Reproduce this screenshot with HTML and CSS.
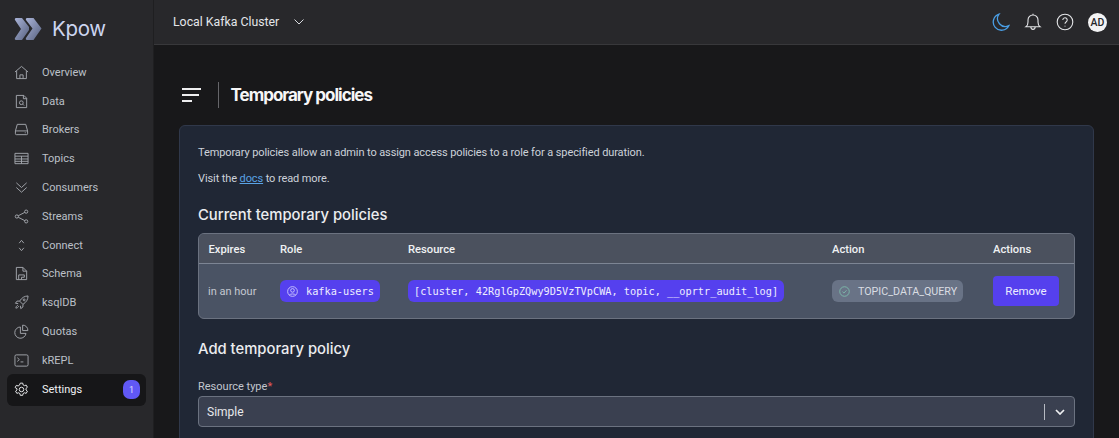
FILE: index.html
```html
<!DOCTYPE html>
<html lang="en">
<head>
<meta charset="utf-8">
<title>Temporary policies</title>
<link rel="stylesheet" href="styles.css">
</head>
<body>
<div class="app">
  <aside class="sidebar">
    <div class="brand">
      <svg class="logo" viewBox="0 0 28 24" width="28" height="24"><defs><linearGradient id="lg" x1="0" y1="0" x2="1" y2="1"><stop offset="0" stop-color="#aab4d8"/><stop offset="1" stop-color="#56607e"/></linearGradient></defs><path d="M2 1h6l7 9v3l-7 10H2c-1 0-1.500-1-1-2l6-9-6-9C.5 2 1 1 2 1z" fill="url(#lg)"/><path d="M13 1h6.500L27.500 11.500 19.500 23H13c-1 0-1.500-1-1-2l6.500-9.500L12 3c-.5-1 0-2 1-2z" fill="url(#lg)"/></svg>
      <span class="brand-name">Kpow</span>
    </div>
    <nav class="nav">
      <a class="nav-item"><svg class="ic" viewBox="0 0 16 16"><path d="M1 7.500 8 1.500l7 6M2.800 6.500V14.500h10.400V6.500M6.300 14.500v-4h3.400v4"/></svg><span>Overview</span></a>
      <a class="nav-item"><svg class="ic" viewBox="0 0 16 16"><path d="M2.500 1.500h8l3 3v10h-11zM10 1.500v3.500h3.500"/><circle cx="7.800" cy="9.300" r="2"/><path d="m9.300 10.800 1.400 1.400"/></svg><span>Data</span></a>
      <a class="nav-item"><svg class="ic" viewBox="0 0 16 16"><path d="M3.500 2.500h9l2 7v3a1 1 0 0 1-1 1h-11a1 1 0 0 1-1-1v-3zM1.500 9.500h13M11.500 11.500h1"/></svg><span>Brokers</span></a>
      <a class="nav-item"><svg class="ic" viewBox="0 0 16 16"><path d="M1 2.500h14v11H1zM1 5.500h14M1 8.500h14M1 11h14M8 5.500v8"/></svg><span>Topics</span></a>
      <a class="nav-item"><svg class="ic" viewBox="0 0 16 16"><path d="m2.500 3 5.500 5 5.500-5M2.500 8l5.500 5 5.500-5"/></svg><span>Consumers</span></a>
      <a class="nav-item"><svg class="ic" viewBox="0 0 16 16"><circle cx="3" cy="8" r="1.700"/><circle cx="13" cy="2.800" r="1.700"/><circle cx="13" cy="13.200" r="1.700"/><path d="m4.500 7.200 7-3.600M4.500 8.800l7 3.600"/></svg><span>Streams</span></a>
      <a class="nav-item"><svg class="ic" viewBox="0 0 16 16"><path d="m5.500 5.500 2.500-3 2.500 3M5.500 10.500l2.500 3 2.500-3"/></svg><span>Connect</span></a>
      <a class="nav-item"><svg class="ic" viewBox="0 0 16 16"><path d="M2.500 1.500h7l4 4v9h-11zM9.500 1.500v4h4M5 9.500h6v2.500H8v2.500M5 9.500v5"/></svg><span>Schema</span></a>
      <a class="nav-item"><svg class="ic" viewBox="0 0 16 16"><path d="M15 1c-4 .2-6.500 1.700-9 5.500l3.500 3.500C13.300 7.500 14.800 5 15 1zM6 6.500H3.200L1.500 8.800l3 .4M9.500 10v2.800l-2.300 1.700-.4-3M4 11c-1.300.5-2 2-2 3 1 0 2.500-.7 3-2"/><circle cx="10.800" cy="5.200" r="1"/></svg><span>ksqlDB</span></a>
      <a class="nav-item"><svg class="ic" viewBox="0 0 16 16"><path d="M6.800 3.200a6 6 0 1 0 6 6.800H6.800z"/><path d="M9.200 1.200a5.500 5.500 0 0 1 5.600 5.800H9.200z"/></svg><span>Quotas</span></a>
      <a class="nav-item"><svg class="ic" viewBox="0 0 16 16"><rect x="1" y="2" width="14" height="12" rx="1.500"/><path d="m3.500 5 2.200 2-2.200 2M7 9.500h3"/></svg><span>kREPL</span></a>
      <a class="nav-item active"><svg class="ic" viewBox="0 0 16 16"><circle cx="8" cy="8" r="2.400"/><path d="M6.700 1.200h2.600l.4 1.900 1.400.8 1.900-.6 1.300 2.300-1.500 1.300v1.600l1.500 1.300-1.300 2.300-1.900-.6-1.400.8-.4 1.900H6.700l-.4-1.900-1.400-.8-1.900.6-1.300-2.300 1.500-1.300V7.200L1.200 5.900l1.300-2.300 1.900.6 1.400-.8z"/></svg><span>Settings</span><b class="badge">1</b></a>
    </nav>
  </aside>
  <div class="column">
    <header class="topbar">
      <span class="cluster">Local Kafka Cluster</span>
      <svg class="cluster-chev" viewBox="0 0 10 6" width="10" height="6"><path d="m.5.500 4.500 4.500L9.500.500"/></svg>
      <div class="top-icons">
        <svg class="top-ic moon" viewBox="0 0 18 18" width="18" height="18"><path d="M7 1.200a7.800 7.800 0 0 0 9.800 11.500A8.200 8.200 0 1 1 7 1.200z"/></svg>
        <svg class="top-ic" viewBox="0 0 18 18" width="18" height="18"><path d="M2 13.800c1.400-1 2-2.300 2-4.800V7a5 5 0 0 1 10 0v2c0 2.500.6 3.800 2 4.800zM6.800 13.800c0 3.400 4.400 3.400 4.400 0M9 2V.8"/></svg>
        <svg class="top-ic" viewBox="0 0 18 18" width="18" height="18"><circle cx="9" cy="9" r="7.800"/><path d="M6.800 7a2.200 2.200 0 1 1 3.500 1.800C9.400 9.400 9 9.900 9 10.800M9 12.800v.6"/></svg>
        <span class="avatar">AD</span>
      </div>
    </header>
    <main class="main">
      <div class="page-head">
        <span class="burger"><i class="l1"></i><i class="l2"></i><i class="l3"></i></span>
        <span class="divider"></span>
        <h1>Temporary policies</h1>
      </div>
      <section class="card">
        <p class="intro">Temporary policies allow an admin to assign access policies to a role for a specified duration.</p>
        <p class="visit">Visit the <a class="link">docs</a> to read more.</p>
        <h2 class="h-current">Current temporary policies</h2>
        <div class="table-wrap">
          <table>
            <colgroup><col class="c1"><col class="c2"><col class="c3"><col class="c4"><col></colgroup>
            <thead><tr><th>Expires</th><th>Role</th><th>Resource</th><th>Action</th><th>Actions</th></tr></thead>
            <tbody><tr>
              <td class="muted">in an hour</td>
              <td><span class="chip"><svg class="chip-ic" viewBox="0 0 12 12" width="11" height="11"><circle cx="6" cy="6" r="5.300"/><circle cx="6" cy="4.800" r="2"/><path d="M2.700 9.800C3.500 8.300 8.500 8.300 9.300 9.800"/></svg>kafka-users</span></td>
              <td><span class="chip code">[cluster, 42RglGpZQwy9D5VzTVpCWA, topic, __oprtr_audit_log]</span></td>
              <td><span class="action-chip"><svg class="ok-ic" viewBox="0 0 12 12" width="11" height="11"><circle cx="6" cy="6" r="5.200"/><path d="m3.800 6.200 1.600 1.500 2.800-3"/></svg>TOPIC_DATA_QUERY</span></td>
              <td class="btn-cell"><button class="btn">Remove</button></td>
            </tr></tbody>
          </table>
        </div>
        <h2 class="h-add">Add temporary policy</h2>
        <label class="field-label">Resource type<em>*</em></label>
        <div class="select">
          <span>Simple</span>
          <span class="sel-sep"></span>
          <svg class="sel-chev" viewBox="0 0 10 6" width="10" height="6"><path d="m1 1 4 4 4-4"/></svg>
        </div>
      </section>
    </main>
  </div>
</div>
</body>
</html>
```

FILE: styles.css
```css
* { box-sizing: border-box; }
html, body { margin: 0; height: 100%; overflow: hidden; background: #18181a; }
body { font-family: Roboto, "Liberation Sans", sans-serif; color: #e5e7eb; }
.app { display: flex; height: 438px; width: 1119px; overflow: hidden; }

.sidebar { width: 154px; flex: none; background: #28282b; border-right: 1px solid #1f1f21; }
.brand { height: 44px; padding: 13px 0 0 14px; display: flex; align-items: center; gap: 10px; }
.logo { flex: none; }
.brand-name { font-family: Inter, sans-serif; font-size: 20.500px; font-weight: 400; color: #ccd5f0; letter-spacing: -.3px; }
.nav { padding: 14px 7px 0; display: flex; flex-direction: column; }
.nav-item { height: 28.800px; display: flex; align-items: center; gap: 13px; padding-left: 7px; font-size: 11px; font-weight: 400; color: #bcc0c8; }
.ic { width: 15px; height: 15px; flex: none; fill: none; stroke: #a4a7ae; stroke-width: 1; }
.nav-item.active { height: 32px; margin-top: -1px; background: #161618; border-radius: 6px; color: #f0f1f3; padding-right: 6px; }
.nav-item.active .ic { stroke: #f0f1f3; }
.badge { margin-left: auto; width: 17px; height: 19px; border-radius: 7px; background: #6058f5; color: #dcdcff; font-size: 9px; font-weight: 400; display: flex; align-items: center; justify-content: center; }

.column { flex: 1; min-width: 0; display: flex; flex-direction: column; }
.topbar { height: 45px; flex: none; background: #28282b; border-bottom: 1px solid #38383b; display: flex; align-items: center; padding: 0 12px 0 19px; }
.cluster { font-size: 12.300px; color: #e4e6ea; }
.cluster-chev { margin-left: 15px; fill: none; stroke: #d8dade; stroke-width: 1; }
.top-icons { margin-left: auto; display: flex; align-items: center; gap: 14px; }
.top-ic { fill: none; stroke: #e4e5e8; stroke-width: 1.100; }
.moon { stroke: #4a9fe6; stroke-width: 1.300; }
.avatar { width: 19px; height: 19px; border-radius: 50%; background: #f3f3f4; color: #26262a; font-size: 10.500px; font-weight: 500; display: flex; align-items: center; justify-content: center; }

.main { flex: 1; min-height: 0; padding: 0 25px; }
.page-head { height: 80px; display: flex; align-items: center; padding: 20px 0 0 3px; }
.burger { width: 19px; display: flex; flex-direction: column; gap: 4.500px; }
.burger i { display: block; height: 1.500px; background: #eeeeef; }
.burger .l2 { width: 17px; }
.burger .l3 { width: 10px; }
.divider { width: 1px; height: 26px; background: #66666a; margin: 0 12px 0 16.500px; }
h1 { margin: 0; font-family: Inter, sans-serif; font-size: 17px; font-weight: 700; letter-spacing: -1px; color: #f6f6f7; }

.card { height: 340px; background: #202735; border: 1px solid #30384a; border-radius: 6px 6px 0 0; padding: 19px 18px 0 18px; }
.intro, .visit { margin: 0; font-size: 11px; letter-spacing: -.1px; line-height: 16px; color: #cdd2da; }
.visit { margin-top: 10px; }
.link { color: #5aa3e6; text-decoration: underline; }
h2 { margin: 0; font-family: Inter, sans-serif; font-weight: 500; font-size: 14.800px; color: #ecedf0; }
.h-current { margin-top: 19px; line-height: 18px; }
.table-wrap { margin-top: 9px; border: 1px solid #6b7280; border-radius: 6px; background: #4a5364; overflow: hidden; }
table { border-collapse: collapse; width: 100%; table-layout: fixed; }
.c1 { width: 81px; } .c2 { width: 128px; } .c3 { width: 424px; } .c4 { width: 161px; }
th { height: 29px; padding: 2px 0 0 9.500px; text-align: left; font-size: 11.200px; font-weight: 500; color: #f0f1f3; background: #4b515e; border-bottom: 1px solid #7d8594; }
th + th { padding-left: 0; }
td { height: 55px; padding: 1px 0 0 9px; font-size: 11px; }
td + td { padding-left: 0; }
td.btn-cell { padding-top: 0; }
.muted { color: #c4c8d0; }
.chip { display: inline-flex; align-items: center; gap: 8px; height: 22px; padding: 0 6px 0 7px; border-radius: 6px; background: #5540ee; color: #eeeefe; font-family: "DejaVu Sans Mono", "Liberation Mono", monospace; font-size: 10.250px; white-space: nowrap; vertical-align: middle; }
.chip-ic { fill: none; stroke: #d9d6ff; stroke-width: .9; }
.chip.code { padding: 0 6px; }
.action-chip { display: inline-flex; align-items: center; gap: 8px; height: 22px; padding: 0 6px 0 7px; border-radius: 6px; background: #697386; color: #d9dde3; font-size: 10.700px; white-space: nowrap; vertical-align: middle; }
.ok-ic { fill: none; stroke: #7fc4b0; stroke-width: .9; }
.btn { width: 66px; height: 30px; border: 0; border-radius: 4px; background: #5540ee; color: #ececff; font: 400 11.500px Roboto, sans-serif; }
.h-add { margin-top: 21px; line-height: 18px; }
.field-label { display: block; margin-top: 22px; font-size: 11px; line-height: 14px; color: #c2c6ce; }
.field-label em { color: #e25c5c; font-style: normal; }
.select { margin-top: 2px; height: 31px; border: 1px solid #6b7280; border-radius: 4px; background: #3a4050; display: flex; align-items: center; padding: 0 9px 0 8px; font-size: 12px; color: #e8e9ec; }
.sel-sep { margin-left: auto; width: 1px; height: 16px; background: #b6bac2; }
.sel-chev { margin-left: 10px; fill: none; stroke: #eeeff1; stroke-width: 1.700; }
```
